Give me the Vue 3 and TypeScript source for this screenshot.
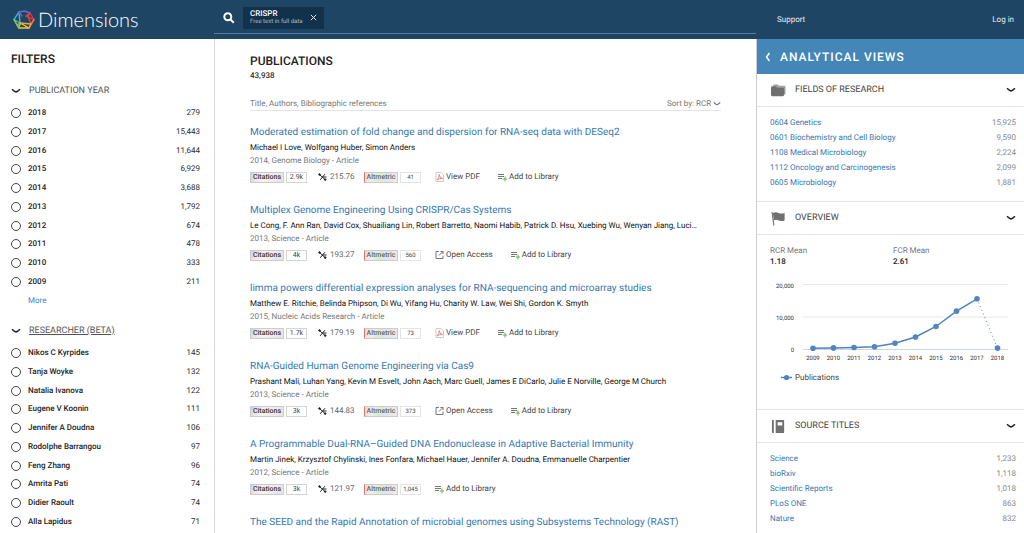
<script setup lang="ts">
import { computed, ref } from 'vue'

interface Facet { label: string; count: string }
interface Publication {
  title: string
  authors: string
  meta: string
  citations: string
  rcr: string
  altmetric: string
  access?: 'pdf' | 'open'
}

const years: Facet[] = [
  { label: '2018', count: '279' },
  { label: '2017', count: '15,443' },
  { label: '2016', count: '11,644' },
  { label: '2015', count: '6,929' },
  { label: '2014', count: '3,688' },
  { label: '2013', count: '1,792' },
  { label: '2012', count: '674' },
  { label: '2011', count: '478' },
  { label: '2010', count: '333' },
  { label: '2009', count: '211' },
]

const researchers: Facet[] = [
  { label: 'Nikos C Kyrpides', count: '145' },
  { label: 'Tanja Woyke', count: '132' },
  { label: 'Natalia Ivanova', count: '122' },
  { label: 'Eugene V Koonin', count: '111' },
  { label: 'Jennifer A Doudna', count: '106' },
  { label: 'Rodolphe Barrangou', count: '97' },
  { label: 'Feng Zhang', count: '96' },
  { label: 'Amrita Pati', count: '74' },
  { label: 'Didier Raoult', count: '74' },
  { label: 'Alla Lapidus', count: '71' },
]

const publications: Publication[] = [
  {
    title: 'Moderated estimation of fold change and dispersion for RNA-seq data with DESeq2',
    authors: 'Michael I Love, Wolfgang Huber, Simon Anders',
    meta: '2014, Genome Biology - Article',
    citations: '2.9k', rcr: '215.76', altmetric: '41', access: 'pdf',
  },
  {
    title: 'Multiplex Genome Engineering Using CRISPR/Cas Systems',
    authors: 'Le Cong, F. Ann Ran, David Cox, Shuailiang Lin, Robert Barretto, Naomi Habib, Patrick D. Hsu, Xuebing Wu, Wenyan Jiang, Luci…',
    meta: '2013, Science - Article',
    citations: '4k', rcr: '193.27', altmetric: '560', access: 'open',
  },
  {
    title: 'limma powers differential expression analyses for RNA-sequencing and microarray studies',
    authors: 'Matthew E. Ritchie, Belinda Phipson, Di Wu, Yifang Hu, Charity W. Law, Wei Shi, Gordon K. Smyth',
    meta: '2015, Nucleic Acids Research - Article',
    citations: '1.7k', rcr: '179.19', altmetric: '73', access: 'pdf',
  },
  {
    title: 'RNA-Guided Human Genome Engineering via Cas9',
    authors: 'Prashant Mali, Luhan Yang, Kevin M Esvelt, John Aach, Marc Guell, James E DiCarlo, Julie E Norville, George M Church',
    meta: '2013, Science - Article',
    citations: '3k', rcr: '144.83', altmetric: '373', access: 'open',
  },
  {
    title: 'A Programmable Dual-RNA–Guided DNA Endonuclease in Adaptive Bacterial Immunity',
    authors: 'Martin Jinek, Krzysztof Chylinski, Ines Fonfara, Michael Hauer, Jennifer A. Doudna, Emmanuelle Charpentier',
    meta: '2012, Science - Article',
    citations: '3k', rcr: '121.97', altmetric: '1,045',
  },
  {
    title: 'The SEED and the Rapid Annotation of microbial genomes using Subsystems Technology (RAST)',
    authors: '', meta: '', citations: '', rcr: '', altmetric: '',
  },
]

const fields: Facet[] = [
  { label: '0604 Genetics', count: '15,925' },
  { label: '0601 Biochemistry and Cell Biology', count: '9,590' },
  { label: '1108 Medical Microbiology', count: '2,224' },
  { label: '1112 Oncology and Carcinogenesis', count: '2,099' },
  { label: '0605 Microbiology', count: '1,881' },
]

const sources: Facet[] = [
  { label: 'Science', count: '1,233' },
  { label: 'bioRxiv', count: '1,118' },
  { label: 'Scientific Reports', count: '1,018' },
  { label: 'PLoS ONE', count: '863' },
  { label: 'Nature', count: '832' },
]

const sort = ref('RCR')
const query = ref('')
const selected = ref<string[]>([])

const points = computed(() =>
  [...years].reverse().map((y, i) => ({
    year: y.label,
    x: 43 + i * 20.5,
    y: 73 - Number(y.count.replace(',', '')) * 0.00325,
  })),
)
const solidLine = computed(() => points.value.slice(0, 9).map(p => `${p.x},${p.y}`).join(' '))
</script>

<template>
  <div class="app">
    <header class="topbar">
      <a class="logo" href="#" aria-label="Dimensions">
        <svg class="logo-mark" viewBox="0 0 22 20" aria-hidden="true">
          <g fill="none" stroke-width="1.4" stroke-linejoin="round" stroke-linecap="round">
            <path d="M6 2 1 9.500 6 18" stroke="#3fa9dd" />
            <path d="M6 2 7 13 1 9.500" stroke="#49b8c9" />
            <path d="M6 2 11.500 1 17 3" stroke="#6a6bc0" />
            <path d="M6 2 9 6 M13 6 17 3" stroke="#7d5fae" />
            <path d="M17 3 21 9.500 13 6" stroke="#d8344b" />
            <path d="M21 9.500 18 14 15 6 17 3" stroke="#e4423a" />
            <path d="M18 14 16 18 21 9.500" stroke="#f0813a" />
            <path d="M7 13 16 18 6 18Z" stroke="#f6c62f" />
            <path d="M7 13 18 14 16 18" stroke="#f3a531" />
            <path d="M1 9.500 4 15 7 13 6 18 4 15" stroke="#8fc64a" />
          </g>
        </svg>
        <span>Dimensions</span>
      </a>
      <form class="search" role="search" @submit.prevent>
        <button class="search-go" type="submit" aria-label="Search">
          <svg viewBox="0 0 12 12"><circle cx="4.800" cy="4.800" r="3.500" /><path d="m7.500 7.500 3.300 3.300" /></svg>
        </button>
        <div class="chip">
          <div class="chip-text"><b>CRISPR</b><small>Free text in full data</small></div>
          <button type="button" aria-label="Remove CRISPR">
            <svg viewBox="0 0 8 8"><path d="m1 1 6 6M7 1 1 7" /></svg>
          </button>
        </div>
        <input v-model="query" class="search-input" type="text" aria-label="Search terms">
      </form>
      <nav class="links">
        <a href="#">Support</a>
        <a href="#">Log in</a>
      </nav>
    </header>

    <div class="columns">
      <aside class="filters">
        <h1>FILTERS</h1>
        <section>
          <button class="facet-head" type="button">
            <svg class="chevron" viewBox="0 0 10 6"><path d="M1 1.200Q3.500 3.500 5 4Q6.500 3.500 9 1.200" /></svg>
            <span>PUBLICATION YEAR</span>
          </button>
          <ul class="facets">
            <li v-for="y in years" :key="y.label">
              <label><input v-model="selected" type="checkbox" :value="y.label">{{ y.label }}</label>
              <span>{{ y.count }}</span>
            </li>
          </ul>
          <a class="more" href="#">More</a>
        </section>
        <section>
          <button class="facet-head underlined" type="button">
            <svg class="chevron" viewBox="0 0 10 6"><path d="M1 1.200Q3.500 3.500 5 4Q6.500 3.500 9 1.200" /></svg>
            <span>RESEARCHER (BETA)</span>
          </button>
          <ul class="facets">
            <li v-for="r in researchers" :key="r.label">
              <label><input v-model="selected" type="checkbox" :value="r.label">{{ r.label }}</label>
              <span>{{ r.count }}</span>
            </li>
          </ul>
        </section>
      </aside>

      <main class="results">
        <h2>PUBLICATIONS</h2>
        <p class="total">43,938</p>
        <div class="list-bar">
          <span>Title, Authors, Bibliographic references</span>
          <div class="sort">
            <label for="sort">Sort by:</label>
            <select id="sort" v-model="sort">
              <option>RCR</option>
              <option>Date</option>
            </select>
            <svg class="chevron" viewBox="0 0 10 6"><path d="M1 1.200Q3.500 3.500 5 4Q6.500 3.500 9 1.200" /></svg>
          </div>
        </div>
        <article v-for="p in publications" :key="p.title" class="pub">
          <h3><a href="#">{{ p.title }}</a></h3>
          <template v-if="p.authors">
            <p class="authors">{{ p.authors }}</p>
            <p class="meta">{{ p.meta }}</p>
            <div class="metrics">
              <span class="badge citations">Citations</span>
              <span class="badge-count">{{ p.citations }}</span>
              <span class="rcr">
                <svg viewBox="0 0 9 8"><path d="M1.500 1.500 7 6.500M7 1.200 4.500 4 2.200 6.800M4.500 4H8.500" /><circle cx="1.500" cy="1.500" r=".8" /><circle cx="7.200" cy="6.600" r=".8" /></svg>
                {{ p.rcr }}
              </span>
              <span class="badge altmetric">Altmetric</span>
              <span class="badge-count light">{{ p.altmetric }}</span>
              <a v-if="p.access === 'pdf'" class="action" href="#">
                <svg class="pdf" viewBox="0 0 9 10"><path d="M1 .5h5L8.500 3v6.500H1z" /><path class="red" d="M2 8Q4.500 5.500 4.200 2.500Q4.500 6 7.500 6.500Q4.500 6 2 8" /></svg>
                View PDF
              </a>
              <a v-if="p.access === 'open'" class="action" href="#">
                <svg class="open" viewBox="0 0 9 10"><path d="M4 1.500H1v7h7v-3M5.500 1.500H8V4M8 1.500 4 5.500" /></svg>
                Open Access
              </a>
              <button class="action" type="button">
                <svg class="add" viewBox="0 0 9 10"><path d="M0 2.500h6M0 4.500h6M0 6.500h4" /><path class="green" d="M7 4.500v5M4.700 7h4.300" /></svg>
                Add to Library
              </button>
            </div>
          </template>
        </article>
      </main>

      <aside class="analytics">
        <div class="analytics-head">
          <button type="button" aria-label="Collapse analytical views"><svg viewBox="0 0 6 10"><path d="M4.500 1 1.500 5l3 4" /></svg></button>
          <h2>ANALYTICAL VIEWS</h2>
        </div>

        <section class="panel fields">
          <button class="panel-head" type="button">
            <svg class="panel-icon" viewBox="0 0 16 16"><path class="back" d="M2.500 1.500H7L8.500 3H14q1.500 0 1.500 1.500V11q0 1.500-1.500 1.500H2.500z" /><path d="M1.500 3.500H5L6.500 5h6Q14 5 14 6.500v6q0 1.500-1.500 1.500h-11Q0 14 0 12.500V5q0-1.500 1.500-1.500z" /></svg>
            <span>FIELDS OF RESEARCH</span>
            <svg class="chevron" viewBox="0 0 10 6"><path d="M1 1.200Q3.500 3.500 5 4Q6.500 3.500 9 1.200" /></svg>
          </button>
          <ul class="ranking">
            <li v-for="f in fields" :key="f.label"><a href="#">{{ f.label }}</a><span>{{ f.count }}</span></li>
          </ul>
        </section>

        <section class="panel overview">
          <button class="panel-head" type="button">
            <svg class="panel-icon" viewBox="0 0 16 16"><path d="M.5 1h1.200l2 14.500H2.500z" /><path d="M2 2q3-1.500 6 0t6.500 0v8q-3 1.500-6 0t-5.500 0z" /></svg>
            <span>OVERVIEW</span>
            <svg class="chevron" viewBox="0 0 10 6"><path d="M1 1.200Q3.500 3.500 5 4Q6.500 3.500 9 1.200" /></svg>
          </button>
          <dl class="means">
            <div><dt>RCR Mean</dt><dd>1.18</dd></div>
            <div><dt>FCR Mean</dt><dd>2.61</dd></div>
          </dl>
          <svg class="chart" viewBox="0 0 240 108" role="img" aria-label="Publications per year">
            <g class="grid"><path d="M33 8.500h205M33 41h205" /><path class="axis" d="M33 73.500h205" /></g>
            <g class="y-labels">
              <text x="24" y="12">20,000</text><text x="24" y="44">10,000</text><text x="24" y="76">0</text>
            </g>
            <g class="x-labels"><text v-for="p in points" :key="p.year" :x="p.x" y="84">{{ p.year }}</text></g>
            <polyline class="series" :points="solidLine" />
            <line class="projection" :x1="points[8].x" :y1="points[8].y" :x2="points[9].x" :y2="points[9].y" />
            <circle v-for="p in points" :key="p.year" class="dot" :cx="p.x" :cy="p.y" r="2.800" />
            <path class="series" d="M11 101.500h11" /><circle class="dot" cx="16.500" cy="101.500" r="2.600" />
            <text class="legend" x="25" y="104">Publications</text>
          </svg>
        </section>

        <section class="panel sources">
          <button class="panel-head" type="button">
            <svg class="panel-icon" viewBox="0 0 16 16"><path d="M1.500 1H3v14H1.500Q1 15 1 14.500v-13Q1 1 1.500 1zM5 1h8.500q.5 0 .5.500v13q0 .5-.5.500H5zM7 3.500V7h5V3.500z" fill-rule="evenodd" /></svg>
            <span>SOURCE TITLES</span>
            <svg class="chevron" viewBox="0 0 10 6"><path d="M1 1.200Q3.500 3.500 5 4Q6.500 3.500 9 1.200" /></svg>
          </button>
          <ul class="ranking">
            <li v-for="s in sources" :key="s.label"><a href="#">{{ s.label }}</a><span>{{ s.count }}</span></li>
          </ul>
        </section>
      </aside>
    </div>
  </div>
</template>

<style>
body { margin: 0; background: #fff; }
</style>

<style scoped>
.app {
  height: 100vh;
  display: flex;
  flex-direction: column;
  overflow: hidden;
  font: 8px/12px Roboto, "Open Sans", sans-serif;
  color: #2c2c2c;
  text-rendering: geometricPrecision;
}
* { box-sizing: border-box; }
h1, h2, h3, p, ul, dl, dd { margin: 0; padding: 0; }
ul { list-style: none; }
a { color: inherit; text-decoration: none; }
button { font: inherit; color: inherit; background: none; border: 0; padding: 0; text-align: left; text-rendering: inherit; cursor: pointer; }
svg { display: block; flex: none; }

.topbar, .columns { display: grid; grid-template-columns: 214px minmax(0, 1fr) 268px; }
.topbar { flex: none; height: 39px; background: #1f4564; color: #e8eef3; }
.logo { display: flex; align-items: center; gap: 3px; padding-left: 13px; font: 300 20px/38px Lato, sans-serif; color: #fff; }
.logo-mark { width: 22px; height: 20px; }
.search { display: flex; align-items: center; height: 34px; padding: 4px 0 2px 9px; border-bottom: 1px solid #557f9f; }
.search-go svg { width: 12px; height: 12px; fill: none; stroke: #fff; stroke-width: 2; }
.chip { display: flex; align-items: center; gap: 7px; height: 22px; margin-left: 8px; padding: 0 7px; background: #12324b; }
.chip-text { display: flex; flex-direction: column; }
.chip b { font: 500 8px/8px Roboto, sans-serif; color: #fff; }
.chip small { font-size: 6px; line-height: 7px; color: #a9bac8; }
.chip svg { width: 7px; height: 7px; fill: none; stroke: #fff; stroke-width: 1; }
.search-input { flex: 1; min-width: 0; border: 0; outline: 0; background: none; color: #fff; font: inherit; }
.links { display: flex; justify-content: space-between; align-items: center; padding: 0 10px 0 21px; font-size: 8px; }

.columns { flex: 1; min-height: 0; }
.filters { padding: 12px 14px 0 11px; border-right: 1px solid #d9d9d9; margin-right: -1px; }
.filters h1 { font: 500 12px/16px Roboto, sans-serif; color: #222; }
.facet-head { display: flex; align-items: center; gap: 8px; height: 14px; margin-top: 17px; font-size: 9px; color: #555; }
.chevron { width: 10px; height: 6px; fill: none; stroke: #222; stroke-width: 1.5; }
.underlined span { text-decoration: underline; }
.facets { display: grid; grid-auto-rows: 1fr; height: 187px; margin-top: 6px; }
.facets li { display: flex; justify-content: space-between; align-items: center; }
.facets label { display: flex; align-items: center; gap: 7px; font-weight: 500; color: #222; }
.facets input { appearance: none; width: 10px; height: 10px; margin: 0; border: 1px solid #444; border-radius: 50%; }
.facets input:checked { background: #4486b8; }
.more { display: block; margin: 4px 0 0 17px; color: #4486b8; }

.results { padding: 15px 35px 0 36px; }
.results h2 { font: 500 12px/15px Roboto, sans-serif; color: #222; }
.total { font-weight: 500; line-height: 14px; }
.list-bar { display: flex; justify-content: space-between; margin-top: 15px; border-bottom: 1px solid #e3e3e3; color: #777; }
.sort { display: flex; align-items: center; gap: 2px; }
.sort select { appearance: none; border: 0; padding: 0; background: none; font: inherit; color: inherit; text-rendering: inherit; width: 15px; }
.sort .chevron { width: 8px; stroke: #777; }
.pub { height: 63px; margin: 14px 0 15px; }
.pub h3 { font: 400 10px/16px Roboto, sans-serif; color: #3579b0; white-space: nowrap; }
.authors { line-height: 14px; white-space: nowrap; overflow: hidden; text-overflow: ellipsis; color: #111; }
.meta { color: #777; }
.metrics { display: flex; align-items: center; height: 12px; margin-top: 4px; color: #444; white-space: nowrap; }
.badge { width: 34px; height: 11px; border: 1px solid #ccc; text-align: center; font: 500 7px/9px Roboto, sans-serif; color: #333; }
.citations { background: linear-gradient(115deg, #b9d5ea 0, #f6e2dc 18%, #f3f3f3 40%, #e4e4e4); }
.altmetric { margin-left: 11px; border-left-color: #d77; background: linear-gradient(110deg, #f8d6c8 0, #f0edee 25%, #dcebc4 45%, #dbe6f0 60%, #ebebeb); color: #666; }
.badge-count { width: 21px; height: 11px; margin-left: 2px; border: 1px solid #d4d4d4; text-align: center; font-size: 7px; line-height: 9px; }
.light { border-color: #e4e4e4; font-size: 6px; }
.rcr { display: flex; align-items: center; gap: 3px; width: 35px; margin-left: 11px; color: #666; }
.rcr svg { width: 9px; height: 8px; fill: #222; stroke: #222; stroke-width: 1; }
.action { display: flex; align-items: center; gap: 2px; margin-left: 18px; }
.badge-count + .action { margin-left: 14px; }
.action svg { width: 9px; height: 10px; fill: none; stroke: #777; stroke-width: 1; }
.action .pdf { stroke: #ccc; }
.action .red { stroke: #e08a8a; }
.action .green { stroke: #62b54a; }

.analytics { border-left: 1px solid #ccc; }
.analytics-head { display: flex; align-items: center; gap: 9px; height: 35px; padding-left: 8px; background: #4486b8; color: #fff; }
.analytics-head svg { width: 6px; height: 10px; fill: none; stroke: #fff; stroke-width: 1.5; }
.analytics-head h2 { font: 500 12px/16px Roboto, sans-serif; letter-spacing: 1px; }
.panel { border-bottom: 1px solid #e4e4e4; }
.fields { height: 128px; }
.overview { height: 208px; }
.sources { border-bottom: 0; }
.panel-head { display: flex; align-items: center; width: 100%; height: 33px; padding: 0 8px 0 14px; border-bottom: 1px solid #e4e4e4; font-size: 9px; color: #444; }
.panel-head .chevron { margin-left: auto; }
.panel-icon { width: 15px; height: 15px; margin-right: 9px; fill: #707070; }
.back { fill: #a0a0a0; }
.ranking { padding: 8px 8px 0 13px; }
.ranking li { display: flex; justify-content: space-between; line-height: 15px; color: #888; }
.ranking a { color: #3579b0; }
.means { display: grid; grid-template-columns: 1fr 1fr; padding: 10px 8px 0 13px; line-height: 11px; }
.means dt { color: #777; }
.means dd { font-weight: 500; color: #222; }
.chart { width: 240px; height: 108px; margin: 9px 0 0 13px; }
.grid path { fill: none; stroke: #e8e8e8; }
.grid .axis { stroke: #ccd6eb; }
.x-labels text { text-anchor: middle; font-size: 6px; fill: #333; }
.y-labels text { text-anchor: end; font-size: 6px; fill: #333; }
.legend { font-size: 8px; fill: #444; }
.series { fill: none; stroke: #5085b8; stroke-width: 1.5; }
.projection { stroke: #5085b8; stroke-width: 1; stroke-dasharray: 1 3; }
.dot { fill: #4f86bd; }
</style>
